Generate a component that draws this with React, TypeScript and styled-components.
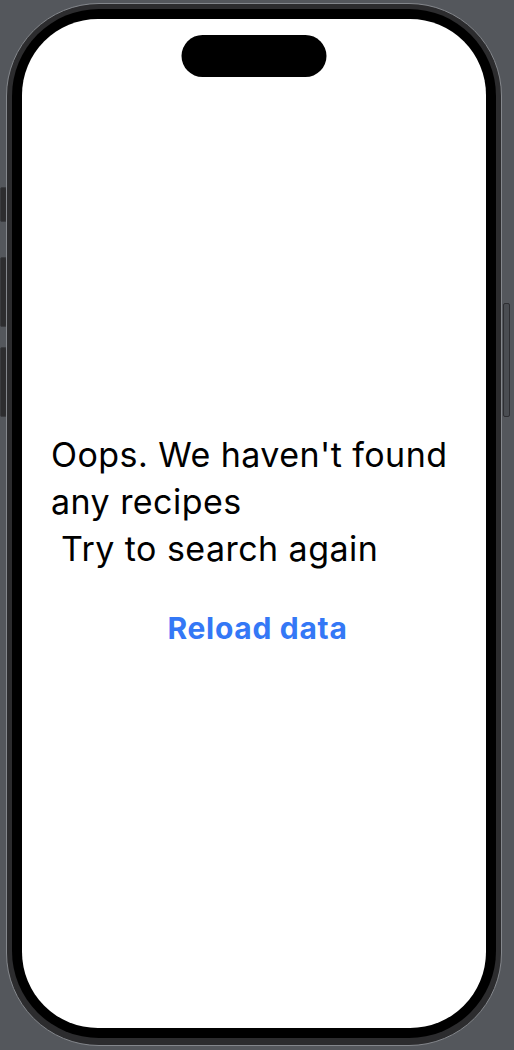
import React from 'react';
import styled, { createGlobalStyle } from 'styled-components';

const GlobalStyle = createGlobalStyle`
    html, body {
        margin: 0;
        padding: 0;
        background: #54575c;
    }
    #root {
        width: 514px;
        height: 1050px;
    }
`;

const App: React.FC = () => {
    return (
        <>
            <GlobalStyle />
            <Stage>
                <LeftRail>
                    <SideButton $offset={0} $height={35} />
                    <SideButton $offset={35} $height={70} />
                    <SideButton $offset={20} $height={70} />
                </LeftRail>
                <Frame>
                    <Bezel>
                        <Screen>
                            <Island />
                            <Content>
                                <Message>
                                    {"Oops. We haven't found any recipes\n Try to search again"}
                                </Message>
                                <ReloadButton type="button">Reload data</ReloadButton>
                            </Content>
                        </Screen>
                    </Bezel>
                </Frame>
                <RightRail>
                    <PowerButton />
                </RightRail>
            </Stage>
        </>
    );
};

export default App;

const Stage = styled.div`
    display: flex;
    align-items: flex-start;
    width: 514px;
    height: 1050px;
    overflow: hidden;
`;

const LeftRail = styled.div`
    display: flex;
    flex-direction: column;
    width: 6px;
    padding-top: 187px;
    flex-shrink: 0;
`;

const RightRail = styled.div`
    display: flex;
    flex-direction: column;
    padding: 303px 0 0 1px;
    flex-shrink: 0;
`;

const SideButton = styled.div<{ $offset: number; $height: number }>`
    margin-top: ${({ $offset }) => $offset}px;
    height: ${({ $height }) => $height}px;
    width: 7px;
    background: #2d2d2f;
    border: 1px solid #3a3b3e;
    border-radius: 2px;
    box-sizing: border-box;
`;

const PowerButton = styled.div`
    width: 7px;
    height: 114px;
    background: #4a4d52;
    border: 1px solid #2e2f33;
    border-radius: 2px;
    box-sizing: border-box;
`;

const Frame = styled.div`
    flex-shrink: 0;
    margin-top: 3px;
    width: 496px;
    height: 1043px;
    box-sizing: border-box;
    border: 1px solid #84878c;
    border-radius: 93px;
    background: #2c2c2e;
    padding: 5px 5px 7px 5px;
`;

const Bezel = styled.div`
    height: 100%;
    box-sizing: border-box;
    background: #000;
    border-radius: 87px;
    padding: 10px;
`;

const Screen = styled.div`
    position: relative;
    height: 100%;
    background: #fff;
    border-radius: 76px;
    overflow: hidden;
    display: flex;
    flex-direction: column;
`;

const Island = styled.div`
    position: absolute;
    top: 16px;
    left: 50%;
    transform: translateX(-50%);
    width: 145px;
    height: 42px;
    border-radius: 21px;
    background: #000;
`;

const Content = styled.div`
    display: flex;
    flex-direction: column;
    padding: 412px 0 0 29px;
`;

const Message = styled.p`
    margin: 0;
    width: 425px;
    font-family: Inter, 'Noto Sans', sans-serif;
    font-size: 34px;
    line-height: 47px;
    letter-spacing: 0.45px;
    color: #000;
    white-space: pre-wrap;
`;

const ReloadButton = styled.button`
    align-self: center;
    margin: 38px 22px 0 0;
    padding: 0;
    border: none;
    background: none;
    font-family: Inter, 'Noto Sans', sans-serif;
    font-weight: 700;
    font-size: 30px;
    line-height: 36px;
    letter-spacing: 0.7px;
    color: #3478f6;
    cursor: pointer;
`;
